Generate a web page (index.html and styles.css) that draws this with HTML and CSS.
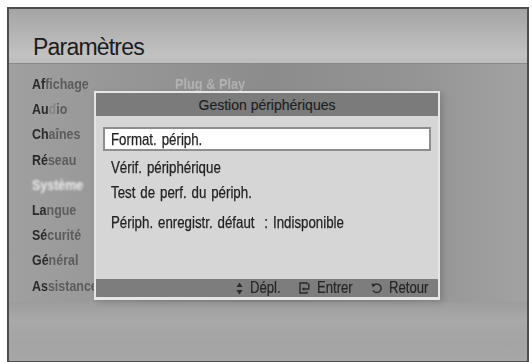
FILE: index.html
```html
<!DOCTYPE html>
<html lang="fr">
<head>
<meta charset="utf-8">
<title>Paramètres</title>
<link rel="stylesheet" href="styles.css">
</head>
<body>
<div class="frame">
  <header class="head"><h1 class="title">Paramètres</h1></header>
  <main class="content">
    <ul class="menu">
      <li><span class="t"><b>Af</b><span class="dim">fichage</span></span></li>
      <li><span class="t"><b>Au</b><span class="dim gone">d</span><span class="dim">io</span></span></li>
      <li><span class="t"><b>Ch</b><span class="dim">aînes</span></span></li>
      <li><span class="t"><b>Ré</b><span class="dim">seau</span></span></li>
      <li><span class="t"><span class="dim white">Système</span></span></li>
      <li><span class="t"><b>La</b><span class="dim">ngue</span></span></li>
      <li><span class="t"><b>Sé</b><span class="dim">curité</span></span></li>
      <li><span class="t"><b>Gé</b><span class="dim">néral</span></span></li>
      <li><span class="t"><b>As</b><span class="dim">sistance</span></span></li>
    </ul>
    <div class="panel"><span class="plug">Plug &amp; Play</span></div>

    <section class="dialog">
      <div class="dlg-title">Gestion périphériques</div>
      <div class="dlg-body">
        <div class="item active"><span class="t">Format. périph.</span></div>
        <div class="item i2"><span class="t">Vérif. périphérique</span></div>
        <div class="item i3"><span class="t">Test de perf. du périph.</span></div>
        <div class="item i4"><span class="t">Périph. enregistr. défaut&nbsp; : Indisponible</span></div>
      </div>
      <div class="dlg-foot">
        <span class="key"><svg class="ic" width="7" height="13" viewBox="0 0 7 13"><path d="M3.5 0.5 L6.5 5 H0.5 Z M3.5 12.5 L6.5 8 H0.5 Z" fill="#2a2a2a"/></svg><span class="lbl l1">Dépl.</span></span>
        <span class="key"><svg class="ic" width="11" height="12" viewBox="0 0 11 12"><path d="M8 2.5 V1 H1 V11 H8 V9.5" fill="none" stroke="#2a2a2a" stroke-width="1.4"/><path d="M9.8 1.5 V7 H4.5" fill="none" stroke="#2a2a2a" stroke-width="1.4"/><path d="M2.8 7 L5.3 5 V9 Z" fill="#2a2a2a"/></svg><span class="lbl l2">Entrer</span></span>
        <span class="key"><svg class="ic" width="11" height="12" viewBox="0 0 11 12"><path d="M2.5 3.5 A4.3 4.3 0 1 1 2 8.2" fill="none" stroke="#2a2a2a" stroke-width="1.4"/><path d="M0.3 1.5 L4.8 2.2 L1.9 5.4 Z" fill="#2a2a2a"/></svg><span class="lbl l3">Retour</span></span>
      </div>
    </section>
  </main>
  <footer class="bottom"></footer>
</div>
</body>
</html>
```

FILE: styles.css
```css
html, body {
  margin: 0;
  padding: 0;
  background: #ffffff;
}
body {
  font-family: "Liberation Sans", Arial, sans-serif;
}
.frame {
  position: relative;
  box-sizing: border-box;
  width: 522px;
  height: 356px;
  margin: 7px 0 0 7px;
  border: 2px solid #4e4e4e;
  display: flex;
  flex-direction: column;
  overflow: hidden;
}
.head {
  height: 54px;
  flex: none;
  background: linear-gradient(to bottom, #a4a4a4 0%, #b2b2b2 40%, #c2c2c2 85%, #bdbdbd 100%);
  padding-left: 24px;
  box-sizing: border-box;
}
.title {
  margin: 0;
  padding-top: 24px;
  font-weight: normal;
  font-size: 23px;
  letter-spacing: -0.8px;
  line-height: 28px;
  color: #1c1c1c;
}
.content {
  position: relative;
  height: 239px;
  flex: none;
  display: flex;
  background: linear-gradient(to right, #a0a0a0 0%, #989898 18%, #8c8c8c 50%, #959595 80%, #a2a2a2 100%);
  border-top: 1px solid #8a8a8a;
  box-sizing: border-box;
}
.t {
  display: inline-block;
  white-space: pre;
  transform: scaleX(0.83);
  transform-origin: 0 50%;
}
.menu {
  list-style: none;
  margin: 0;
  padding: 7px 0 0 23px;
  width: 120px;
  font-size: 15px;
  line-height: 25.2px;
  color: #2a2a2a;
}
.menu b { font-weight: bold; }
.menu .dim {
  font-weight: bold;
  color: #5c5c5c;
  filter: blur(0.7px);
}
.menu .gone { color: #868686; }
.menu .white { color: #ececec; filter: blur(1px); }
.panel {
  flex: 1;
  padding: 7px 0 0 23px;
}
.plug {
  display: inline-block;
  transform: scaleX(0.85);
  transform-origin: 0 50%;
  font-weight: bold;
  font-size: 15px;
  line-height: 25px;
  color: #b2b2b2;
  filter: blur(0.6px);
}
.bottom {
  flex: 1;
  background: linear-gradient(to bottom, #9c9c9c 0%, #a9a9a9 30%, #a4a4a4 70%, #a7a7a7 100%);
}
.dialog {
  position: absolute;
  left: 85px;
  top: 27px;
  width: 346px;
  height: 209px;
  box-sizing: border-box;
  border: 2px solid #e6e6e6;
  border-bottom-width: 3px;
  display: flex;
  flex-direction: column;
  color: #222;
  box-shadow: 3px 2px 6px rgba(0,0,0,0.15);
}
.dlg-title {
  height: 23px;
  background: #7b7b7b;
  text-align: center;
  font-size: 14px;
  line-height: 24px;
  color: #1e1e1e;
  -webkit-text-stroke: 0.15px #1e1e1e;
}
.dlg-body {
  flex: 1;
  background: #d6d6d6;
  padding: 11px 7px 0 7px;
}
.item {
  box-sizing: border-box;
  height: 24px;
  border: 2px solid transparent;
  padding-left: 6px;
  font-size: 16px;
  line-height: 21px;
  word-spacing: 1.5px;
  -webkit-text-stroke: 0.25px #222;
}
.item.active {
  background: #ffffff;
  border-color: #8e8e8e;
}
.i2 { margin-top: 4px; }
.i3 { margin-top: 1px; }
.i4 { margin-top: 6px; }
.dlg-foot {
  height: 18px;
  background: #7d7d7d;
  display: flex;
  justify-content: flex-end;
  gap: 18px;
  padding-right: 10px;
  font-size: 16px;
  line-height: 18px;
  color: #262626;
  -webkit-text-stroke: 0.2px #262626;
}
.key {
  display: flex;
  align-items: center;
  gap: 7px;
}
.ic { flex: none; }
.lbl {
  display: inline-block;
  transform: scaleX(0.82);
  transform-origin: 0 50%;
}
.l1 { margin-right: -6.7px; }
.l2 { margin-right: -7.9px; }
.l3 { margin-right: -8.6px; }
```
